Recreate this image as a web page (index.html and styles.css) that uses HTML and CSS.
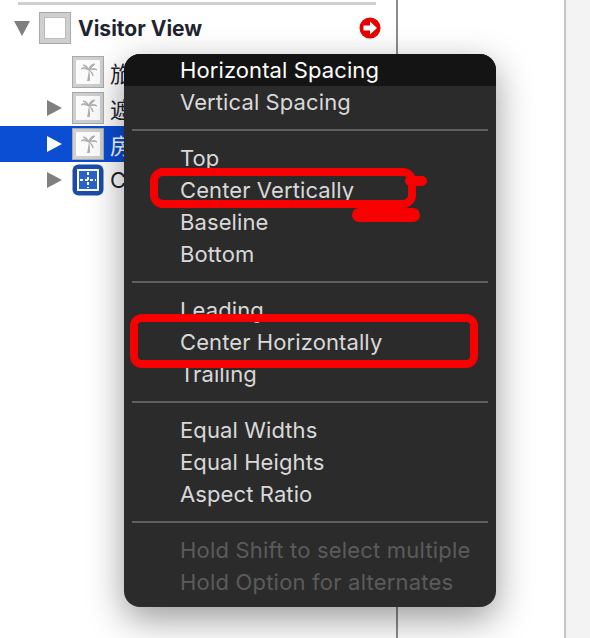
FILE: index.html
```html
<!DOCTYPE html>
<html lang="en">
<head>
  <meta charset="UTF-8" />
  <meta name="viewport" content="width=device-width, initial-scale=1.0" />
  <title>Add Constraints Menu</title>
  <link rel="stylesheet" href="styles.css">
</head>
<body>
  <svg width="0" height="0" class="defs">
    <symbol id="image-icon" viewBox="0 0 32 32">
      <rect x="0.500" y="0.500" width="31" height="31" fill="#cfcfcf" stroke="#a9a9a9"/>
      <rect x="4" y="4" width="24" height="24" fill="#fbfbfb"/>
      <path d="M17 14c-1 4-1 8-2 11h3c0-4 0-8-1-11z" fill="#b0b0b0"/>
      <path d="M17 14c-3-3-6-3-8-1 3-1 5 0 8 1zM17 14c-1-3-3-5-6-5 2 1 4 3 6 5zM17 14c0-3 2-6 6-6-2 2-4 4-6 6zM17 14c3-2 6-2 8 0-3-1-5-1-8 0zM17 14c2 1 4 3 4 6-1-3-3-5-4-6z" fill="#b0b0b0" stroke="#b0b0b0"/>
    </symbol>
  </svg>

  <div class="page">
    <section class="outline">
      <div class="outline-rule"></div>

      <div class="row row-head">
        <span class="arrow open"></span>
        <span class="view-box"><span></span></span>
        <span class="view-name">Visitor View</span>
        <svg class="warn" width="22" height="22" viewBox="0 0 22 22">
          <circle cx="11" cy="11" r="10.500" fill="#e60000"/>
          <path d="M4.500 8.500h6.500v-4l7 6.500-7 6.500v-4h-6.500z" fill="#fff"/>
        </svg>
      </div>

      <div class="row">
        <span class="arrow none"></span>
        <svg class="icon" width="32" height="32"><use href="#image-icon"/></svg>
        <span class="row-text">旅</span>
      </div>
      <div class="row">
        <span class="arrow"></span>
        <svg class="icon" width="32" height="32"><use href="#image-icon"/></svg>
        <span class="row-text">遮</span>
      </div>
      <div class="row selected">
        <span class="arrow"></span>
        <svg class="icon" width="32" height="32"><use href="#image-icon"/></svg>
        <span class="row-text">房</span>
      </div>
      <div class="row">
        <span class="arrow"></span>
        <svg class="icon" width="32" height="32" viewBox="0 0 32 32">
          <rect x="0.500" y="0.500" width="31" height="31" rx="6" fill="#1b4ca8"/>
          <rect x="6" y="6" width="20" height="20" fill="#2a63c8" stroke="#fff" stroke-width="2"/>
          <path d="M16 8v16M8 16h16" stroke="#fff" stroke-width="2" stroke-dasharray="3 2"/>
        </svg>
        <span class="row-text">Co</span>
      </div>
    </section>
    <section class="canvas"></section>
    <aside class="side"></aside>
  </div>

  <div class="menu">
    <div class="menu-item active">Horizontal Spacing</div>
    <div class="menu-item">Vertical Spacing</div>
    <div class="menu-sep"></div>
    <div class="menu-item">Top</div>
    <div class="menu-item">Center Vertically</div>
    <div class="menu-item">Baseline</div>
    <div class="menu-item">Bottom</div>
    <div class="menu-sep"></div>
    <div class="menu-item">Leading</div>
    <div class="menu-item">Center Horizontally</div>
    <div class="menu-item">Trailing</div>
    <div class="menu-sep"></div>
    <div class="menu-item">Equal Widths</div>
    <div class="menu-item">Equal Heights</div>
    <div class="menu-item">Aspect Ratio</div>
    <div class="menu-sep"></div>
    <div class="menu-item disabled">Hold Shift to select multiple</div>
    <div class="menu-item disabled">Hold Option for alternates</div>
  </div>

  <svg class="scribble" width="590" height="638" viewBox="0 0 590 638">
    <g fill="none" stroke="#f90000" stroke-width="8">
      <rect x="154" y="172" width="258" height="32" rx="9"/>
      <rect x="134" y="318" width="340" height="46" rx="8"/>
    </g>
    <rect x="405" y="176" width="22" height="10" rx="5" fill="#f90000"/>
    <rect x="352" y="208" width="68" height="14" rx="7" fill="#f90000"/>
  </svg>
</body>
</html>
```

FILE: styles.css
```css
* { box-sizing: border-box; }
html, body { height: 100%; }
body {
  margin: 0;
  background: #fff;
  font-family: "Inter", "Noto Sans CJK SC", sans-serif;
  color: #1f2430;
  overflow: hidden;
}
.defs { position: absolute; }

.page { display: flex; height: 638px; }
.outline {
  flex: 0 0 398px;
  border-right: 2px solid #8c8c8c;
  padding: 2px 20px 0 0;
}
.canvas {
  flex: 0 0 168px;
  border-right: 2px solid #c4c4c4;
}
.side { flex: 1; background: #f3f3f3; }

.outline-rule { height: 3px; margin-left: 18px; background: #d0d0d0; }

.row {
  display: flex;
  align-items: center;
  height: 36px;
  margin-right: -20px;
  padding-left: 47px;
  font-size: 22px;
}
.row .icon { margin-left: 10px; flex: none; }
.row-text { margin-left: 6px; }
.row.selected { background: #0b4dd3; color: #fff; }

.row-head {
  height: 46px;
  margin: 0 0 3px;
  padding-left: 14px;
}
.view-box {
  width: 32px;
  height: 32px;
  margin-left: 9px;
  padding: 4px;
  background: #cfcfcf;
  border: 1px solid #a9a9a9;
}
.view-box span { display: block; height: 100%; background: #fff; border: 1px solid #bbb; }
.view-name { margin-left: 7px; font-weight: 700; font-size: 21px; }
.warn { margin-left: auto; margin-right: -5px; }

.arrow {
  width: 0;
  height: 0;
  flex: none;
  border-style: solid;
  border-width: 8px 0 8px 15px;
  border-color: transparent transparent transparent #7f7f7f;
}
.selected .arrow { border-left-color: #fff; }
.arrow.open {
  border-width: 15px 8.5px 0 8.5px;
  border-color: #7f7f7f transparent transparent transparent;
}
.arrow.none { visibility: hidden; }

.menu {
  position: absolute;
  left: 124px;
  top: 54px;
  width: 372px;
  height: 553px;
  background: #2b2b2b;
  border-radius: 16px;
  overflow: hidden;
  box-shadow: 0 12px 36px rgba(0, 0, 0, 0.4);
}
.menu-item {
  height: 32px;
  padding-left: 56px;
  line-height: 32px;
  font-size: 22px;
  letter-spacing: 0.1px;
  white-space: nowrap;
  color: #d9d9d9;
}
.menu-item.active { background: #141414; color: #fff; }
.menu-item.disabled { color: #5b5b5b; letter-spacing: 0.2px; }
.menu-sep {
  height: 2px;
  margin: 11px 8px;
  background: #5f5f5f;
}

.scribble {
  position: absolute;
  left: 0;
  top: 0;
  pointer-events: none;
}
```
